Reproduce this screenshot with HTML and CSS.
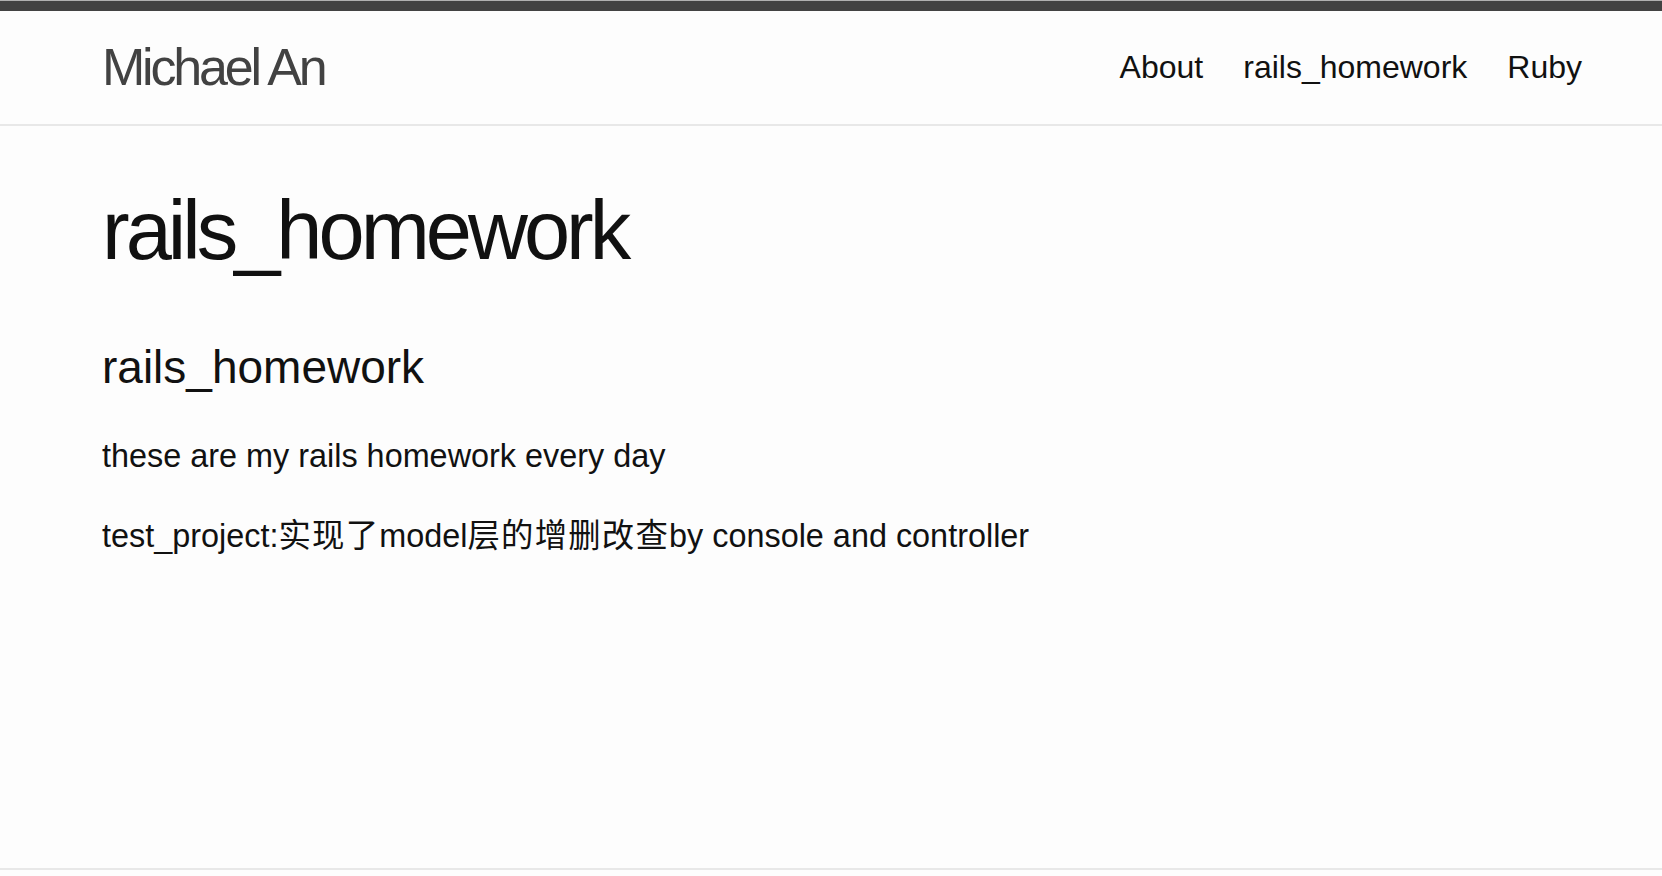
FILE: index.html
```html
<!DOCTYPE html>
<html lang="zh-CN">
<head>
<meta charset="utf-8">
<title>rails_homework</title>
<link rel="stylesheet" href="styles.css">
</head>
<body>
<header class="site-header">
  <div class="wrapper header-inner">
    <a class="site-title" href="#">Michael An</a>
    <nav class="site-nav">
      <a class="nav-link" href="#">About</a>
      <a class="nav-link" href="#">rails_homework</a>
      <a class="nav-link" href="#">Ruby</a>
    </nav>
  </div>
</header>
<main class="page-content">
  <div class="wrapper">
    <h1 class="post-title">rails_homework</h1>
    <h2 class="sub-title">rails_homework</h2>
    <p class="text">these are my rails homework every day</p>
    <p class="text">test_project:<span class="cjk">实现了</span>model<span class="cjk">层的增删改查</span>by console and controller</p>
  </div>
</main>
<footer class="site-footer"></footer>
</body>
</html>
```
FILE: styles.css
```css
html, body {
  margin: 0;
  padding: 0;
}
body {
  background: #fdfdfd;
  color: #111;
  font-family: "Liberation Sans", "Noto Sans CJK SC", sans-serif;
  font-size: 32px;
  padding-top: 1px;
  box-shadow: inset 0 1px 0 #b0b0b0;
}
a {
  text-decoration: none;
}
.wrapper {
  padding: 0 80px 0 102px;
}
.site-header {
  border-top: 10px solid #424242;
  border-bottom: 2px solid #e8e8e8;
  height: 113px;
}
.header-inner {
  display: flex;
  justify-content: space-between;
  align-items: flex-start;
}
.site-title {
  font-size: 52px;
  font-weight: 300;
  line-height: 113px;
  letter-spacing: -3.2px;
  color: #424242;
}
.site-nav {
  display: flex;
  gap: 40px;
  line-height: 113px;
}
.nav-link {
  color: #111;
  font-size: 32px;
}
.page-content {
  min-height: 742px;
  box-sizing: border-box;
  padding-top: 63px;
}
.post-title {
  margin: 0;
  font-size: 83px;
  font-weight: 400;
  line-height: 84px;
  letter-spacing: -4px;
}
.sub-title {
  margin: 60px 0 30px;
  font-size: 46px;
  font-weight: 400;
  line-height: 69px;
}
.text {
  margin: 0 0 32px;
  font-size: 32.4px;
  line-height: 48px;
}
.cjk {
  letter-spacing: 1.2px;
}
.site-footer {
  border-top: 2px solid #e8e8e8;
  height: 120px;
}
```
